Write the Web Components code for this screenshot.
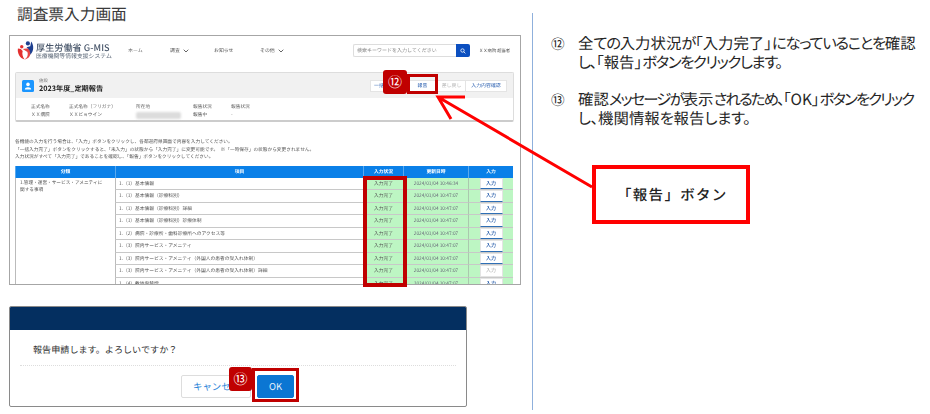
<!DOCTYPE html>
<html lang="ja"><head><meta charset="utf-8"><title>調査票入力画面</title>
<style>
html,body{margin:0;padding:0;background:#fff}
body{font-family:"Noto Sans CJK JP","Noto Sans",sans-serif;width:930px;height:414px;overflow:hidden;text-rendering:geometricPrecision}
</style></head><body>
<manual-page></manual-page>
<script>
const FONT='"Noto Sans CJK JP","Noto Sans",sans-serif';
function def(name,html){
  customElements.define(name,class extends HTMLElement{
    connectedCallback(){
      if(this.shadowRoot)return;
      const r=this.attachShadow({mode:'open'});
      r.innerHTML=typeof html==='function'?html(this):html;
    }
  });
}
def('gmis-logo',`<style>
:host{display:flex;align-items:center;gap:1px;width:94px;flex:none;color:#48566a;white-space:nowrap}
svg{width:18px;height:21px;flex:none}
.t{display:flex;flex-direction:column}
.a{font:500 9.1px/10px ${FONT};letter-spacing:.05px}
.b{font:400 5.85px/7px ${FONT};color:#5c6878}
</style>
<svg viewBox="0 0 19 21"><circle cx="11.5" cy="3" r="2.2" fill="#1d3f8f"/><circle cx="5" cy="6.5" r="1.8" fill="#e3302f"/>
<path d="M1 8.5C0 13 3 19 8 20c-2-3-3-6-2-9L4 9z" fill="#e3302f"/><path d="M6 9l5 3c1 3 0 6-3 8 5-1 7-5 6-9l-2-3z" fill="#e3302f" opacity=".9"/>
<path d="M15 1c3 4 3 10-1 14 0-4-1-6-4-8l4-1z" fill="#1d3f8f"/></svg>
<div class="t"><span class="a">厚生労働省 G-MIS</span><span class="b">医療機関等情報支援システム</span></div>`);
const chev=`<svg width="6" height="4" viewBox="0 0 6 4" style="margin-left:3px"><path d="M.7.7 3 3 5.3.7" fill="none" stroke="#555" stroke-width=".9"/></svg>`;
def('top-nav',`<style>
:host{display:flex;align-items:center;height:29px;padding:0 0 0 7px;color:#555;font:400 4.9px/8px ${FONT};white-space:nowrap}
.i{display:flex;margin-left:17px;width:225px;flex:none}
.i span{display:inline-flex;align-items:center}
.s{display:flex;height:13px;width:117px;flex:none}
.s div{flex:1;border:1px solid #ddd;border-right:0;border-radius:2px 0 0 2px;color:#888;padding-left:3px;line-height:11px;font-size:5px}
.s b{width:14px;background:#0b4fc0;display:flex;align-items:center;justify-content:center;border-radius:0 2px 2px 0}
.u{margin-left:9px;font-size:4.3px;color:#444}
.x{width:42px}.y{width:44px}.z{width:46px}.w{width:93px}
</style>
<gmis-logo></gmis-logo>
<div class="i"><span class="x">ホーム</span><span class="y">調査${chev}</span><span class="z">お知らせ</span><span class="w">その他${chev}</span></div>
<div class="s"><div>検索キーワードを入力してください</div><b><svg width="6" height="6" viewBox="0 0 6 6"><circle cx="2.5" cy="2.5" r="1.7" fill="none" stroke="#fff" stroke-width=".8"/><path d="M3.8 3.8 5.4 5.4" stroke="#fff" stroke-width=".8"/></svg></b></div>
<span class="u">ＸＸ病院 超当者</span>`);
def('info-col',h=>`<style>
:host{display:block;font:400 4.7px/8px ${FONT};color:#666;white-space:nowrap}
.v{color:#555}.bl{display:block;width:45px;height:7px;margin-top:.5px;background:#dcdcdc;border-radius:2px;filter:blur(1px)}
</style><div>${h.getAttribute('label')}</div>${h.hasAttribute('blur')?'<span class="bl"></span>':`<div class="v">${h.getAttribute('value')}</div>`}`);
def('report-card',`<style>
:host{display:block;margin:0 6px 0 5px;border:1px solid #ddd;border-bottom:2px solid #ccc;border-radius:2px;height:47px;background:#fff;font-family:${FONT}}
.h{background:#f1f1f1;height:25px;display:flex;align-items:center;padding-left:6px}
.ic{width:12px;height:12px;background:#1b96ff;border-radius:1.5px;margin-right:5px;display:flex;align-items:center;justify-content:center}
.t{display:flex;flex-direction:column;margin-top:1px}
.t small{font-size:4.4px;line-height:5px;color:#777}
.t b{font-size:7.2px;line-height:10px;color:#222;font-weight:700}
.bs{margin-left:auto;display:flex;margin-right:6px;height:11px;font-size:4.9px;text-align:center;color:#2a5fb0}
.bs span{background:#fff;border:1px solid #e4e4e4;border-left:0;height:10px;line-height:10px}
.d{display:flex;padding:5px 0 0 15px}
.d info-col:nth-child(1){width:38px}.d info-col:nth-child(2){width:67px}.d info-col:nth-child(3){width:57px}.d info-col:nth-child(4){width:38px}
</style>
<div class="h"><div class="ic"><svg width="8" height="8" viewBox="0 0 8 8"><circle cx="4" cy="2.4" r="1.8" fill="#fff"/><path d="M.8 7.6c0-3 6.4-3 6.4 0z" fill="#fff"/></svg></div>
<div class="t"><small>施設</small><b>2023年度_定期報告</b></div>
<div class="bs"><span style="border-left:1px solid #e4e4e4;text-align:left;padding-left:3px;box-sizing:border-box;width:38px;height:12px">一括入力</span><span style="width:29px">報告</span><span style="width:27px;color:#bbb">差し戻し</span><span style="width:40px">入力内容確認</span></div></div>
<div class="d"><info-col label="正式名称" value="ＸＸ病院"></info-col><info-col label="正式名称（フリガナ）" value="ＸＸビョウイン"></info-col><info-col label="所在地" blur></info-col><info-col label="報告状況" value="報告中"></info-col><info-col label="報告状況" value="-"></info-col></div>`);
def('survey-row',h=>{
 const off=h.hasAttribute('off');
 return `<style>
:host{display:contents}
div{box-sizing:border-box;border-bottom:1px solid #c8c8c8;font:400 4.75px/12.5px ${FONT};color:#555;white-space:nowrap;overflow:hidden}
.n{padding-left:3px;border-left:1px solid #bbb;background:#fff}
.g{background:#bdf6c3;text-align:center;border-left:1px solid #aac8ae}
.d{color:#667}
.bw{display:flex;justify-content:center}
.b{width:23px;height:11.5px;background:#fff;border:1px solid #e4e4e4;border-bottom:1px solid ${off?'#e4e4e4':'#2f6fb5'};color:${off?'#bbb':'#1f57a8'};line-height:10px;text-align:center;font-size:5px;font-weight:500}
</style>
<div class="n">${h.getAttribute('name')}</div><div class="g">入力完了</div><div class="g d">${h.getAttribute('time')}</div><div class="g bw"><div class="b">入力</div></div>`});
def('survey-table',`<style>
:host{display:grid;grid-template-columns:100px 248px 40px 65px 45px;grid-template-rows:11.5px repeat(9,12.5px);margin:0 0 0 5px;width:498px;font-family:${FONT}}
.th{background:#0a80e8;color:#fff;font:700 4.8px/11.5px ${FONT};text-align:center;border-left:1px solid #5aa9ee}
.c{grid-row:2/span 9;padding:2px 4px;font:400 4.65px/7.5px ${FONT};color:#555;background:#fff;border-left:1px solid #bbb;white-space:nowrap}
</style>
<div class="th">分類</div><div class="th">項目</div><div class="th">入力状況</div><div class="th">更新日時</div><div class="th">入力</div>
<div class="c">1.管理・運営・サービス・アメニティに<br>関する事項</div>
<slot></slot>`);
def('survey-frame',`<style>
:host{display:block;box-sizing:border-box;width:512px;height:250px;margin-left:9px;border:1px solid #a6a6a6;overflow:hidden;background:#fff}
.in{filter:blur(.3px)}
top-nav{margin-bottom:7px}
.p{margin:0;padding:17px 0 0 5px;font:400 4.7px/7.5px ${FONT};color:#555;white-space:pre;height:27px}
</style><div class="in"><top-nav></top-nav><report-card></report-card>
<p class="p">各機能の入力を行う場合は、「入力」ボタンをクリックし、各都道府県画面で内容を入力してください。
「一括入力完了」ボタンをクリックすると、「未入力」の状態から「入力完了」に変更可能です。　※「一時保存」の状態から変更されません。
入力状況がすべて「入力完了」であることを確認し、「報告」ボタンをクリックしてください。</p>
<slot></slot></div>`);
def('confirm-frame',`<style>
:host{display:block;box-sizing:border-box;width:458px;height:101px;margin:21px 0 0 9px;border:1px solid #8a8a8a;border-radius:2px;overflow:hidden;background:#fff;font-family:${FONT}}
.top{height:23px;background:#042f60}
.msg{height:35px;box-sizing:border-box;padding:12px 0 0 23px;font-size:9.1px;line-height:15px;color:#333}
.sep{border-top:1px dotted #ddd;margin:0 10px}
.bt{display:flex;padding:9px 0 0 171px;gap:6px}
.bt span{height:23px;box-sizing:border-box;border-radius:2px;font-size:9.4px;line-height:21px;text-align:center}
.c{width:70px;border:1px solid #ddd;color:#2a84d8;text-align:left!important;padding-left:11px}
.o{width:37px;background:#0b76d3;color:#e8f2fb;border:1px solid #0b76d3}
</style><div class="top"></div><div class="msg">報告申請します。よろしいですか？</div><div class="sep"></div>
<div class="bt"><span class="c">キャンセル</span><span class="o">OK</span></div>`);
def('step-note',h=>`<style>
:host{display:flex;font:400 15.4px/19px ${FONT};color:#262626;font-feature-settings:"palt";margin-bottom:18px;white-space:nowrap}
.n{width:27px;flex:none;font-size:13.6px}
::slotted(span.k){letter-spacing:-1.35px}
::slotted(span.k.tight){letter-spacing:-1.88px}
::slotted(span.k.loose){letter-spacing:-.3px}
</style><span class="n">${h.getAttribute('n')}</span><div><slot></slot></div>`);
const kana=(s,c='')=>s.replace(/[\u3040-\u30ff、。・]+/g,m=>`<span class="k ${c}">${m}</span>`);
def('manual-page',`<style>
:host{display:grid;grid-template-columns:532px 1px 1fr;position:relative;width:930px;height:414px;font-family:${FONT};overflow:hidden}
.l{min-width:0}
h1{margin:0;padding:4px 0 0 17px;height:35px;box-sizing:border-box;font:400 15.7px/20px ${FONT};color:#3a3a3a}
.dv{background:#8fb0dc;margin:13px 0 4px}
.r{padding:34px 0 0 18px}
.red{position:absolute;box-sizing:border-box;border:3px solid #c00000}
.tab{position:absolute;background:#c00000;color:#fff;border-radius:3px;display:flex;align-items:center;justify-content:center;font:400 14px/1 ${FONT}}
.call{position:absolute;left:592px;top:165px;width:158px;height:59px;box-sizing:border-box;border:4px solid #f00;background:#fff;color:#222;font:500 14.5px/51px ${FONT};letter-spacing:1.3px;padding-left:21px;white-space:nowrap}
svg.ar{position:absolute;left:0;top:0;pointer-events:none}
</style>
<div class="l"><h1>調査票入力画面</h1>
<survey-frame><survey-table>
<survey-row name="1.（1）基本情報" time="2024/01/04 10:46:34"></survey-row>
<survey-row name="1.（1）基本情報（診療科別）" time="2024/01/04 10:47:07"></survey-row>
<survey-row name="1.（1）基本情報（診療科別）詳細" time="2024/01/04 10:47:07"></survey-row>
<survey-row name="1.（1）基本情報（診療科別）診療体制" time="2024/01/04 10:47:07"></survey-row>
<survey-row name="1.（2）病院・診療所・歯科診療所へのアクセス等" time="2024/01/04 10:47:07"></survey-row>
<survey-row name="1.（3）院内サービス・アメニティ" time="2024/01/04 10:47:07"></survey-row>
<survey-row name="1.（3）院内サービス・アメニティ（外国人の患者の受入れ体制）" time="2024/01/04 10:47:07"></survey-row>
<survey-row name="1.（3）院内サービス・アメニティ（外国人の患者の受入れ体制）詳細" time="2024/01/04 10:47:07" off></survey-row>
<survey-row name="1.（4）敷地内禁煙" time="2024/01/04 10:47:07"></survey-row>
</survey-table></survey-frame>
<confirm-frame></confirm-frame></div>
<div class="dv"></div>
<div class="r">
<step-note n="⑫">${kana('全ての入力状況が「入力完了」になっていることを確認')}<br>${kana('し、「報告」ボタンをクリックします。')}</step-note>
<step-note n="⑬">${kana('確認メッセージが表示されるため、「OK」ボタンをクリック','tight')}<br>${kana('し、機関情報を報告します。','loose')}</step-note>
</div>
<svg class="ar" width="930" height="414" viewBox="0 0 930 414"><path d="M592 187 438 97M465 97H438L451 119" fill="none" stroke="#f00" stroke-width="3"/></svg>
<div class="call">「報告」ボタン</div>
<div class="red" style="left:363px;top:176px;width:44px;height:111px;border-width:4px"></div>
<div class="red" style="left:407px;top:74px;width:31px;height:20px;border-width:3.5px"></div>
<div class="tab" style="left:383px;top:70px;width:24px;height:24px">⑫</div>
<div class="red" style="left:252px;top:368px;width:47px;height:34px"></div>
<div class="tab" style="left:229px;top:367px;width:23px;height:24px">⑬</div>`);
</script>
</body></html>
